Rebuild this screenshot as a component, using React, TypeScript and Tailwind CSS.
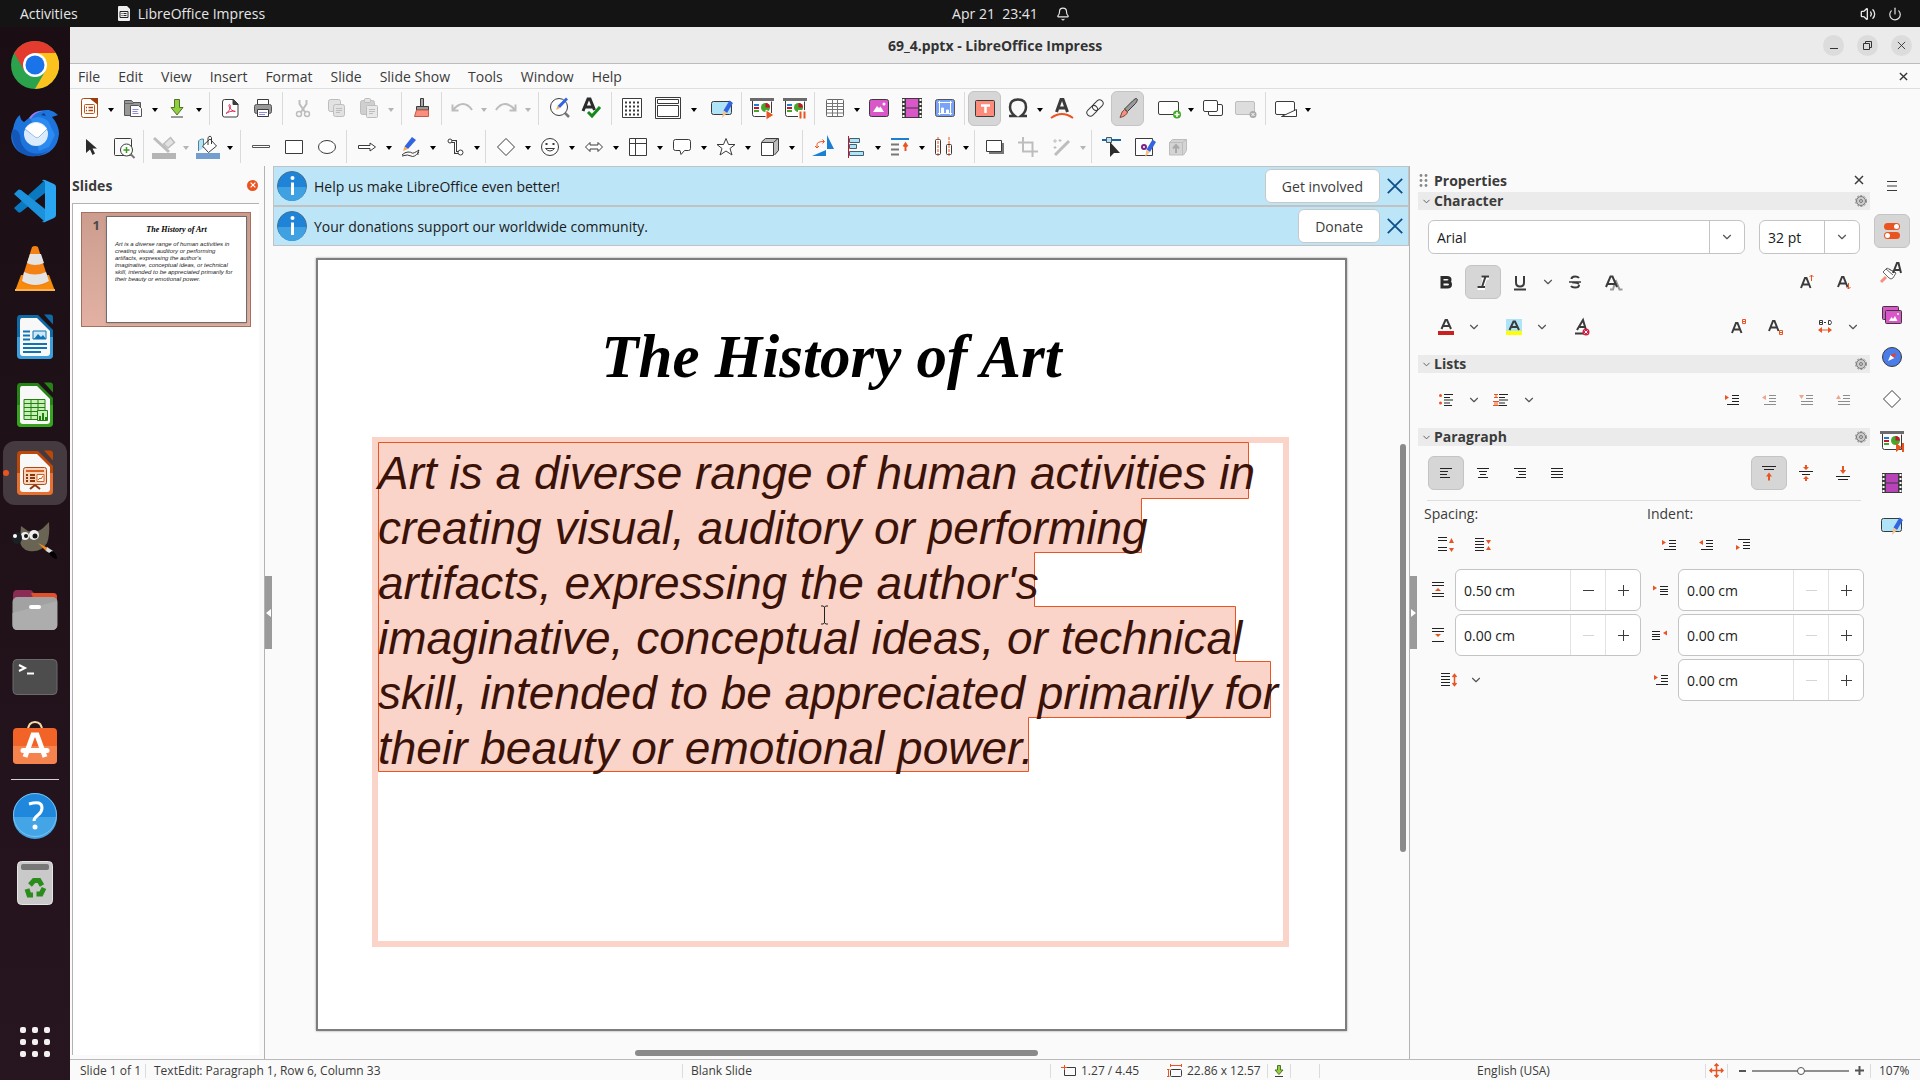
import type { ReactNode } from "react";
import { Bell, ChevronDown, Power, Volume2 } from "lucide-react";

const K = "#3b3b3b";
const G = "#bdbdbd";
const O = "#e95420";

// ---------- toolbar drawings, all on a 24x24 grid ----------

const board = (
  <>
    <path d="M2.500 5v13.500q0 2 2 2h17v-15" fill="#fff" stroke={K} />
    <path d="M0 2h24v3H0z" fill="#6b6b6b" stroke="none" />
    <g stroke="none">
      <path d="M4 8h5v2H4z" fill="#1b7fd4" />
      <path d="M4 11h5v2H4z" fill="#c9102f" />
      <path d="M4 14h5v2H4z" fill="#43a82a" />
      <circle cx="15.500" cy="11.500" r="4.500" fill="#43a82a" />
      <path d="M15.500 11.500V7a4.500 4.500 0 0 1 4.500 4.500z" fill="#c9102f" />
    </g>
  </>
);

const pencil = (
  <g stroke="none">
    <path d="M19.500 4.500l3.500 2.500-6 10-3.500-2.500z" fill="#3465e0" />
    <path d="M13.500 14.500l3.500 2.500-5 5z" fill="#f7c08a" />
  </g>
);

const film = (fill: string) => (
  <>
    <path d="M2 2h20v20H2z" fill={K} stroke="none" />
    <path d="M5.500 2.500h13v19h-13z" fill={fill} stroke={K} />
    <path d="M5.500 12h13" stroke={K} />
    <path d="M3.500 3v18M20.500 3v18" stroke="#fff" strokeWidth="2" strokeDasharray="2 2" />
  </>
);

const icons: Record<string, ReactNode> = {
  new: (
    <>
      <path d="M6.500 2.500h9l5 4v13q0 2-2 2h-12q-2 0-2-2v-15q0-2 2-2z" fill="#fff" stroke="#b04a12" />
      <path d="M12 2h9v7z" fill="#9c3d0c" stroke="none" />
      <rect x="7.500" y="8.500" width="10" height="9" rx="1" stroke="#c0571c" />
      <path d="M9 11.500h1M11.500 11.500H16M9 14.500h1M11.500 14.500H16" stroke="#b04a12" strokeWidth="1.500" />
    </>
  ),
  open: (
    <>
      <path d="M3.500 4.500h7l1.500 2h7.500v13h-16z" fill="#999" stroke="#555" strokeLinejoin="round" />
      <path d="M3.500 7.500h9" stroke="#666" />
      <path d="M9.500 9.500h8l3 3v8h-11z" fill="#fff" stroke="#555" />
      <path d="M11.500 13.500h6M11.500 15.500h5M11.500 17.500h6" stroke="#8d8be0" />
    </>
  ),
  save: (
    <>
      <path d="M9.500 3.500h5v8h3.500L12 19l-6-7.500h3.500z" fill="#8fd03f" stroke="#55702c" />
      <path d="M6 21h12" stroke={K} />
    </>
  ),
  pdf: (
    <>
      <path d="M6.500 3.500h9l4.500 4.500v11q0 2-2 2H6.500q-2 0-2-2v-13q0-2.500 2-2.500z" fill="#fff" stroke={K} />
      <path d="M15 3.500V8.500h5z" fill={K} stroke={K} />
      <path d="M8 17.500c5-3.500 5-9 3.500-9s0 6 5.500 7c1.500 0-4-1.500-9 2z" stroke="#dd2b56" />
    </>
  ),
  print: (
    <>
      <path d="M6.500 3.500h11v6h-11z" fill="#fff" stroke={K} />
      <rect x="3.500" y="8.500" width="17" height="9" rx="2" fill="#999" stroke="#555" />
      <path d="M6.500 13.500h11v7h-11z" fill="#fff" stroke={K} />
      <path d="M8 16.500h8M8 18.500h6" stroke="#8d8be0" />
    </>
  ),
  cut: (
    <>
      <path d="M8.500 4v4l5.500 8M15.500 4v4l-5.500 8" stroke={G} strokeWidth="2" />
      <circle cx="8" cy="18" r="2.500" stroke={G} strokeWidth="1.500" />
      <circle cx="16" cy="18" r="2.500" stroke={G} strokeWidth="1.500" />
    </>
  ),
  copy: (
    <>
      <rect x="4.500" y="3.500" width="12" height="12" rx="2" fill="#e2e2e2" stroke={G} />
      <rect x="9.500" y="8.500" width="11" height="12" rx="2" fill="#e2e2e2" stroke={G} />
      <path d="M12 12.500h6M12 14.500h6M12 16.500h4" stroke={G} />
    </>
  ),
  paste: (
    <>
      <rect x="3.500" y="4.500" width="14" height="14" rx="2" fill="#cfcfcf" stroke={G} />
      <rect x="7.500" y="2.500" width="6" height="4" rx="1" fill="#e2e2e2" stroke={G} />
      <rect x="9.500" y="9.500" width="11" height="12" rx="1" fill="#e8e8e8" stroke={G} />
      <path d="M12 13.500h6M12 15.500h6M12 17.500h4" stroke={G} />
    </>
  ),
  brush: (
    <>
      <path d="M10.500 2.500h3v8h-3z" fill="#aaa" stroke={K} />
      <path d="M6.500 10.500h12v3.500h-12z" fill="#999" stroke={K} />
      <path d="M6.500 14h12v6.500h-14z" fill="#fa8f7f" stroke="#c25b4a" />
    </>
  ),
  undo: <path d="M8.500 14.500h-6v-6M3 14q5-6 10-6t9 6" stroke={G} strokeWidth="2" />,
  redo: <path d="M15.500 14.500h6v-6M21 14q-5-6-10-6t-9 6" stroke={G} strokeWidth="2" />,
  find: (
    <>
      <circle cx="12" cy="11" r="8.500" fill="#fff" stroke={K} />
      <path d="M18 17l4 4" stroke="#777" strokeWidth="2.500" />
      <path d="M19 1.500l2 2-8 8.500-2.500-2z" fill="#3465e0" stroke="none" />
      <path d="M10.500 10l2.500 2-4 2z" fill="#f7a85a" stroke="none" />
    </>
  ),
  spell: (
    <>
      <path d="M3 15L8 3h2l4.500 11M5 11h8" stroke="#2b2b2b" strokeWidth="3" />
      <path d="M8 16l4 4 8-9" stroke="#13891b" strokeWidth="3" />
    </>
  ),
  grid: (
    <>
      <path d="M2.500 2.500h19v19h-19z" fill="#fff" stroke={K} />
      <path d="M5 6.500h14M5 10.500h14M5 14.500h14M5 18.500h14" stroke={K} strokeWidth="2" strokeDasharray="2 2" />
    </>
  ),
  display: (
    <>
      <path d="M-.5 1.500h25v21h-25z" fill="#fff" stroke={K} />
      <path d="M1.500 3.500h21v4h-21zM1.500 9.500h21v11h-21z" stroke={K} />
    </>
  ),
  master: (
    <>
      <rect x="1.500" y="5.500" width="20" height="13" rx="2" fill="#aee3f8" stroke={K} />
      {pencil}
    </>
  ),
  startFirst: (
    <>
      {board}
      <path d="M16 14l8 5-8 5z" fill={O} stroke="#fafafa" />
    </>
  ),
  startCurrent: (
    <>
      {board}
      <path d="M15 14h9v10h-9z" fill="#fafafa" stroke="none" />
      <path d="M17.500 15.500v7M21.500 15.500v7" stroke={O} strokeWidth="2" />
    </>
  ),
  table: (
    <>
      <rect x="3.500" y="3.500" width="17" height="17" rx="1" fill="#fff" stroke="#666" />
      <path d="M3.500 7.500h17M3.500 10.500h17M3.500 13.500h17M3.500 17h17M9.500 3.500v17M14.500 3.500v17" stroke="#777" />
    </>
  ),
  image: (
    <>
      <rect x="2.500" y="3.500" width="19" height="17" rx="2" fill="#d957c8" stroke={K} />
      <path d="M6 16l4-6 2 2 1.500-1.500L17 16z" fill="#fff" stroke="none" />
      <circle cx="17" cy="8" r="1.500" fill="#fff" stroke="none" />
    </>
  ),
  video: film("#d957c8"),
  chart: (
    <>
      <rect x="2.500" y="3.500" width="19" height="17" rx="2" fill="#7aa2f7" stroke="#555" />
      <path d="M6.500 5v14M17.500 5v14M5 6.500h14M5 17.500h14" stroke="#fff" />
      <path d="M8.500 17v-5h2v5zM13.500 17v-3h2v3z" fill="#fff" stroke="#fff" />
    </>
  ),
  textbox: (
    <>
      <rect x="2.500" y="4.500" width="19" height="16" rx="1" fill="#fc8b7b" stroke={K} />
      <path d="M8 9.500h9M12.500 9v8" stroke="#fff" strokeWidth="2.500" />
    </>
  ),
  omega: <path d="M3 20h6c-4-3-5-6-5-9q0-7.500 8-7.500t8 7.500c0 3-1 6-5 9h6" stroke={K} strokeWidth="2.500" />,
  fontwork: (
    <>
      <path d="M6.500 16L11 3.500h2L17.500 16M8.500 12h7" stroke={K} strokeWidth="3" />
      <path d="M1 22q11-8 22 0" stroke={O} strokeWidth="2" />
    </>
  ),
  link: (
    <g stroke={K} transform="rotate(-45 12 12)">
      <rect x="2" y="8.500" width="12" height="7" rx="3.500" />
      <rect x="10" y="8.500" width="12" height="7" rx="3.500" />
    </g>
  ),
  draw: (
    <>
      <path d="M20.500 2.500q2 1-1 5l-8 8-3-2.500 8-8q3-3 4-2.500z" fill="#999" stroke={K} />
      <path d="M8.500 13.500l3 2.500q-1 4-7.500 5.500 2-7 4.500-8z" fill="#fa8f7f" stroke="#7a4a40" />
    </>
  ),
  newSlide: (
    <>
      <rect x="1.500" y="5.500" width="20" height="13" rx="1.500" fill="#fff" stroke={K} />
      <circle cx="20" cy="18.500" r="4" fill="#43a82a" stroke="none" />
      <path d="M20 16v5M17.500 18.500h5" stroke="#fff" strokeWidth="1.500" />
    </>
  ),
  dupSlide: (
    <>
      <rect x="7.500" y="8.500" width="14" height="11" rx="1.500" fill="#fff" stroke={K} />
      <rect x="2.500" y="4.500" width="14" height="11" rx="1.500" fill="#fff" stroke={K} />
    </>
  ),
  delSlide: (
    <>
      <rect x="1.500" y="5.500" width="19" height="13" rx="1.500" fill="#ddd" stroke={G} />
      <circle cx="19" cy="18.500" r="3.500" fill="#aaa" stroke="none" />
      <path d="M17.500 17l3 3M20.500 17l-3 3" stroke="#fff" />
    </>
  ),
  slideLayout: (
    <>
      <rect x="1.500" y="5.500" width="19" height="13" rx="1.500" fill="#fff" stroke={K} />
      <path d="M7.500 20.500h15v-7z" fill="#fff" stroke={K} />
    </>
  ),
  select: <path d="M7 4v14l4-3.500 2.500 5.500 2.500-1.500-2.500-5H18z" fill="#2b2b2b" stroke="none" />,
  zoom: (
    <>
      <rect x="2.500" y="3.500" width="17" height="17" rx="1" stroke={K} />
      <circle cx="14.500" cy="15" r="6" fill="#fff" stroke={K} />
      <path d="M14.500 12v6M11.500 15h6" stroke="#3a9c22" strokeWidth="1.500" />
      <path d="M19 19.500l3.500 3.500" stroke="#777" strokeWidth="2" />
    </>
  ),
  lineColor: (
    <>
      <path d="M2 3l15 14" stroke={G} strokeWidth="3" />
      <path d="M11.500 9l7-6.500 4 5-6.500 5.500z" fill="#e2e2e2" stroke={G} strokeWidth="1.500" />
      <path d="M0 18h24v6H0z" fill="#b5b5b5" stroke="none" />
    </>
  ),
  fillColor: (
    <>
      <path d="M2.500 16V7q0-3 5-3v9" fill="#aee3f8" stroke="#5b7f92" />
      <path d="M6.500 11L14 4l6.500 7-8 6.500z" fill="#fff" stroke={K} />
      <path d="M12 10V2.500q2.500-3 3.500 0V9" stroke={K} />
      <path d="M0 18h24v6H0z" fill="#729fcf" stroke="none" />
    </>
  ),
  line: <path d="M3.500 10.500h17v2h-17z" fill="#fff" stroke="#555" />,
  rect: <path d="M3.500 5.500h17v13h-17z" fill="#fff" stroke={K} />,
  ellipse: <ellipse cx="12" cy="12" rx="8.500" ry="6.500" fill="#fff" stroke={K} />,
  arrowLine: <path d="M3.500 10.500H15v-2.500l5.500 4L15 16v-2.500H3.500z" fill="#fff" stroke={K} />,
  curve: (
    <>
      <path d="M13 2l4 3-8 9-3.500-2.500z" fill="#3465e0" stroke="none" />
      <path d="M5.500 11.500L9 14l-5 2z" fill="#f7a85a" stroke="none" />
      <path d="M3 20q3-3 6-3t4 1 7-3q-2 3-1 5M3 21q6-2 9 0t8-4" stroke={K} />
    </>
  ),
  connector: (
    <>
      <path d="M7.500 6.500h5v11h4" stroke={K} strokeWidth="3" />
      <path d="M7.500 6.500h5v11h4" stroke="#fff" />
      <circle cx="7" cy="6" r="2" fill="#fff" stroke={K} />
      <circle cx="17.500" cy="17.500" r="2.500" fill="#fff" stroke={K} />
    </>
  ),
  diamond: <path d="M12 3.500l8.500 8.500-8.500 8.500L3.500 12z" fill="#fff" stroke={K} />,
  smiley: (
    <>
      <circle cx="12" cy="12" r="8.500" fill="#fff" stroke={K} />
      <path d="M8.500 8v2M15.500 8v2" stroke={K} strokeWidth="2" />
      <path d="M7.500 13.500h9q-4.500 5-9 0z" stroke={K} />
    </>
  ),
  biArrow: <path d="M3.500 12L8 7.500v2.500h8V7.500l4.500 4.500-4.500 4.500V14H8v2.500z" fill="#fff" stroke={K} />,
  flow: <path d="M3.500 3.500h17v17h-17zM3.500 8.500h17M9.500 3.500v17" fill="#fff" stroke={K} />,
  callout: (
    <path d="M5.500 4.500h13q2 0 2 2v7q0 2-2 2h-4l-3.500 4-1-4H5.500q-2 0-2-2v-7q0-2 2-2z" fill="#fff" stroke={K} />
  ),
  star: <path d="M12 3.500l2.500 6h6.500l-5 4 2 6.500-6-4-6 4 2-6.500-5-4h6.500z" fill="#fff" stroke={K} />,
  cube: (
    <>
      <path d="M3.500 7l4-3.500h13v12l-4 4.500" fill="#bdbdbd" stroke={K} />
      <path d="M3.500 7.500h12v13h-12z" fill="#fff" stroke={K} />
      <path d="M16 7l4-3.500" stroke={K} />
    </>
  ),
  rotate: (
    <>
      <path d="M16 0v14h7z" fill="#1b7fd4" stroke="none" />
      <path d="M1 21l14-6v6z" fill="#1b7fd4" stroke="none" />
      <path d="M6 13V9.500q0-3 7-3M4 11l2 2 2-2M11.500 4.500l2 2-2 2" stroke={O} />
    </>
  ),
  align: (
    <>
      <path d="M4.500 1v22" stroke="#c9102f" />
      <path d="M5.500 3.500h10v4h-10zM5.500 9.500h7v4h-7zM5.500 16.500h14v4h-14z" fill="#aee3f8" stroke="#44606c" />
    </>
  ),
  arrange: (
    <>
      <path d="M3 4h18" stroke="#1b7fd4" strokeWidth="2" />
      <path d="M3 9.500h8M3 14.500h8M3 19.500h8" stroke="#777" strokeWidth="2" />
      <path d="M17.500 16V9M15.500 11.500l2-3 2 3" stroke={O} strokeWidth="2" />
    </>
  ),
  distribute: (
    <>
      <rect x="3.500" y="4.500" width="5" height="15" rx="1" fill="#fff" stroke={K} />
      <rect x="14.500" y="9.500" width="5" height="10" rx="1" fill="#fff" stroke={K} />
      <path d="M6 2v20M17 2v20" stroke={O} strokeDasharray="3 1" />
    </>
  ),
  shadow: (
    <>
      <path d="M6 8h15v11H6z" fill="#777" stroke="none" />
      <path d="M3.500 5.500h15v11h-15z" fill="#fff" stroke={K} />
    </>
  ),
  crop: <path d="M7 2v14.500h13M2 7.500h14.500V22M20 16.500h2" stroke={G} strokeWidth="2" />,
  filter: (
    <>
      <path d="M6 20L20 6" stroke={G} strokeWidth="3" />
      <path d="M6 4v4M4 6h4M11 4v3M9.500 5.500h3M6 11v3M4.500 12.500h3" stroke={G} />
    </>
  ),
  points: (
    <>
      <path d="M2 5h19" stroke="#1565a8" strokeWidth="2" />
      <path d="M6.500 2.500h5v5h-5z" fill="#aee3f8" stroke="#555" />
      <path d="M10 7v15l4-4h6z" fill="#2b2b2b" stroke="none" />
    </>
  ),
  glue: (
    <>
      <path d="M2.500 3.500h17v17h-17z" fill="#fff" stroke={K} />
      <circle cx="11" cy="12" r="2" fill="#fff" stroke="#7b2382" strokeWidth="2" />
      {pencil}
    </>
  ),
  extrude: (
    <>
      <path d="M3.500 7.500l3-3h14v11l-3 4.500h-14z" fill="#d4d4d4" stroke={G} />
      <path d="M3.500 7.500h13v12M16.500 7.500l4-3" stroke={G} />
      <path d="M10 18v-7M7 13.500l3-3.500 3 3.500" stroke="#aaa" strokeWidth="2" />
    </>
  ),
  // sidebar deck
  props: (
    <>
      <rect x="4" y="4" width="16" height="7" rx="3.500" fill={O} stroke="none" />
      <rect x="4" y="13" width="16" height="7" rx="3.500" fill={O} stroke="none" />
      <circle cx="16.500" cy="7.500" r="2.500" fill="#fff" stroke="none" />
      <circle cx="7.500" cy="16.500" r="2.500" fill="#fff" stroke="none" />
    </>
  ),
  styles: (
    <>
      <path d="M1 21l5-5" stroke="#fa8f7f" strokeWidth="3" />
      <path d="M3 11l4-4 9 5-3 5q-2 2-4 0z" fill="#fff" stroke="#666" />
      <path d="M6 8l7 6M9 8l7 4" stroke="#666" />
      <path d="M13 12L17 2h1.500L21 12M14 9h6" stroke={K} strokeWidth="2" />
    </>
  ),
  gallery: (
    <>
      <rect x="2.500" y="3.500" width="16" height="13" rx="1" fill="#d957c8" stroke={K} />
      <rect x="5.500" y="7.500" width="16" height="13" rx="1" fill="#d957c8" stroke={K} />
      <path d="M9 18l2.500-4 1.500 2 2-3 2.500 5z" fill="#fff" stroke="none" />
      <circle cx="18" cy="11" r="1" fill="#fff" stroke="none" />
    </>
  ),
  navigator: (
    <>
      <circle cx="12" cy="12" r="9.500" fill="#4a7de8" stroke={K} />
      <path d="M8 16l2.500-6 4 3z" fill="#fff" stroke="none" />
      <path d="M10.500 10l5.500-2-1.500 5z" fill="#e8402a" stroke="none" />
    </>
  ),
  transition: (
    <>
      {board}
      <path d="M16 14l6 4.500-6 4.500z" fill={O} stroke="none" />
      <path d="M23 14v9" stroke={O} strokeWidth="2" />
    </>
  ),
  animation: film("#b843b8"),
  // character row
  bold: <path d="M8 7.500h5q3 0 3 2.250t-3 2.250H8zM8 12h5.500q3 0 3 2.500t-3 2.500H8z" stroke="#2b2b2b" strokeWidth="3" />,
  italic: (
    <>
      <path d="M10.500 7.500h7.500M6.500 18h7.500M14.500 7l-3.500 11" stroke="#fff" strokeWidth="4" />
      <path d="M10.500 6.500h7.500M6.500 17h7.500M14.500 6.500L11 17" stroke={K} strokeWidth="2" />
    </>
  ),
  underline: <path d="M8 6v6.500q0 4 4 4t4-4V6M6 19.500h12" stroke={K} strokeWidth="2" />,
  strike: (
    <>
      <path d="M16 8q-1-1.500-4-1.500-3.500 0-3.500 2.500M8 16q1 1.500 4 1.500 4 0 4-2.500" stroke={K} strokeWidth="2" />
      <path d="M6 12h12M9 12.500q6 0 7 2" stroke={K} strokeWidth="1.500" />
    </>
  ),
  shadowA: (
    <>
      <path d="M10 19.500h3l2.500-9M15.500 10l4 9.500h3" stroke="#999" strokeWidth="2" />
      <path d="M6 17l4.500-10.500h2L17 17M8 14h7" stroke={K} strokeWidth="2" />
    </>
  ),
  grow: (
    <>
      <path d="M7 18l4-10h1.500l4 10M8.500 14.500h7" stroke={K} strokeWidth="2" />
      <path d="M17.500 11V5M15.500 7l2-2 2 2" stroke={O} />
    </>
  ),
  shrink: (
    <>
      <path d="M7 17l4-10h1.500l4 10M8.500 13.500h7" stroke={K} strokeWidth="2" />
      <path d="M17.500 13v6M15.500 17l2 2 2-2" stroke={O} />
    </>
  ),
  fontColor: (
    <>
      <path d="M7.500 14l4-9h1.500l4 9M9 11h7" stroke={K} strokeWidth="2" />
      <path d="M4 16h16v4H4z" fill="#c9211e" stroke="none" />
    </>
  ),
  highlight: (
    <>
      <path d="M4 4h16v12H4z" fill="#aee3f8" stroke="none" />
      <path d="M7.500 15l4-8.500h1.500l4 8.500M9 12h7" stroke={K} strokeWidth="2" />
      <path d="M4 16h16v4H4z" fill="#ff0" stroke="none" />
    </>
  ),
  clear: (
    <>
      <path d="M7 15l6-10 3 10M9 12h7M5 18.500h9" stroke={K} strokeWidth="2" />
      <circle cx="16" cy="17" r="3.500" fill="#d11f45" stroke="none" />
      <path d="M14.500 15.500l3 3M17.500 15.500l-3 3" stroke="#fff" />
    </>
  ),
  sup: (
    <>
      <path d="M6 18l4-10h1.500l4 10M7.500 14.500h7" stroke={K} strokeWidth="2" />
      <path d="M16.500 4.500h3v4h-3zM16.500 6.500h3" stroke={O} />
    </>
  ),
  sub: (
    <>
      <path d="M6 16l4-10h1.500l4 10M7.500 12.500h7" stroke={K} strokeWidth="2" />
      <path d="M16.500 15.500h3v4h-3zM16.500 17.500h3" stroke={O} />
    </>
  ),
  kern: (
    <>
      <path d="M6.500 5.500h3v4h-3zM6.500 7.500h3M11 7.500h2M15.500 5.500h2l1 2-1 2h-2z" stroke={K} />
      <path d="M7 15h10" stroke={O} />
      <path d="M5 15l4-3v6zM19 15l-4-3v6z" fill={O} stroke="none" />
    </>
  ),
  bullets: (
    <>
      <path d="M10 6.500h9M10 9.500h6M10 12h9M10 15h6M10 17.500h8" stroke="#222" />
      <circle cx="6.500" cy="7.500" r="1.500" fill={O} stroke="none" />
      <circle cx="6.500" cy="15" r="1.500" fill={O} stroke="none" />
    </>
  ),
  numbers: (
    <>
      <path d="M10 6.500h9M10 9.500h6M10 12h9M10 15h6M10 17.500h8" stroke="#222" />
      <path d="M5 6.500h4M7 6.500v3M5 9.500h4M4 13.500h6M4 17.500h6M6 13.500v4M8 13.500v4" stroke={O} />
    </>
  ),
  alignL: <path d="M6 7.500h12M6 10.500h8M6 13.500h7M6 16.500h10" stroke="#222" />,
  alignC: <path d="M6 7.500h12M8 10.500h8M9 13.500h6M7 16.500h10" stroke="#222" />,
  alignR: <path d="M6 7.500h12M10 10.500h8M11 13.500h7M8 16.500h10" stroke="#222" />,
  alignJ: <path d="M6 7.500h12M6 10.500h12M6 13.500h12M6 16.500h12" stroke="#222" />,
  vTop: (
    <>
      <path d="M5 5.500h14M7 8.500h10" stroke="#222" />
      <path d="M12 11.500l3 4h-2v4h-2v-4H9z" fill={O} stroke="none" />
    </>
  ),
  vMid: (
    <>
      <path d="M5 10.500h14M8 13.500h8" stroke="#222" />
      <path d="M12 9l-3-3h2V4h2v2h2zM12 15l-3 3h2v2h2v-2h2z" fill={O} stroke="none" />
    </>
  ),
  vBot: (
    <>
      <path d="M5 15.500h14M7 18.500h10" stroke="#222" />
      <path d="M12 13l-3-4h2V5h2v4h2z" fill={O} stroke="none" />
    </>
  ),
  parMore: (
    <>
      <path d="M4 4.500h9M4 7.500h9M4 14.500h9M4 17.500h9" stroke="#222" />
      <path d="M17.500 5l2.500 5h-5zM17.500 19l2.500-4h-5z" fill={O} stroke="none" />
    </>
  ),
  parLess: (
    <>
      <path d="M4 5.500h9M4 8.500h9M4 11.500h9M4 14.500h9M4 17.500h9" stroke="#222" />
      <path d="M17.500 11l2.500-4h-5zM17.500 13l2.500 4h-5z" fill={O} stroke="none" />
    </>
  ),
  indentMore: (
    <>
      <path d="M12 7.500h7M12 10.500h7M12 13.500h7M7 16.500h12" stroke="#222" />
      <path d="M5 7l4 2.500L5 12z" fill={O} stroke="none" />
    </>
  ),
  indentLess: (
    <>
      <path d="M12 7.500h7M12 10.500h7M12 13.500h7M7 16.500h12" stroke="#222" />
      <path d="M9 7l-4 2.500L9 12z" fill={O} stroke="none" />
    </>
  ),
  hanging: (
    <>
      <path d="M7 6.500h12M12 9.500h7M12 12.500h7M12 15.500h7" stroke="#222" />
      <path d="M5 12l4 2.500L5 17z" fill={O} stroke="none" />
    </>
  ),
  demote: (
    <>
      <path d="M12 7.500h7M12 10.500h7M7 13.500h12M7 16.500h12" stroke="#222" />
      <path d="M5 7h5l-2.500 4z" fill={O} stroke="none" />
    </>
  ),
  promote: (
    <>
      <path d="M12 7.500h7M12 10.500h7M7 13.500h12M7 16.500h12" stroke="#222" />
      <path d="M5 11h5l-2.500-4z" fill={O} stroke="none" />
    </>
  ),
  spaceAbove: (
    <>
      <path d="M6 4.500h12M6 7.500h12M6 15.500h12M6 18.500h12" stroke="#222" />
      <path d="M12 10l3 3H9z" fill={O} stroke="none" />
    </>
  ),
  spaceBelow: (
    <>
      <path d="M6 5.500h12M6 8.500h12M6 18.500h12" stroke="#222" />
      <path d="M12 14l3-3H9z" fill={O} stroke="none" />
    </>
  ),
  beforeText: (
    <>
      <path d="M11 8.500h8M11 11.500h8M11 13.500h8M11 16.500h8" stroke="#222" />
      <path d="M4 7.500l4 2.500-4 2.500z" fill={O} stroke="none" />
    </>
  ),
  afterText: (
    <>
      <path d="M3 8.500h8M3 11.500h8M3 13.500h8M3 16.500h8" stroke="#222" />
      <path d="M18 7.500L14 10l4 2.500z" fill={O} stroke="none" />
    </>
  ),
  lineSpacing: (
    <>
      <path d="M4 5.500h9M4 8.500h9M4 11.500h9M4 14.500h9M4 17.500h9" stroke="#222" />
      <path d="M17.500 7v10M15.500 9l2-2.500 2 2.500M15.500 15l2 2.500 2-2.500" stroke={O} strokeWidth="1.500" />
    </>
  ),
};

function Icon({ name }: { name: string }) {
  return (
    <svg width="24" height="24" viewBox="0 0 24 24" fill="none" className="shrink-0 overflow-visible" aria-hidden="true">
      {icons[name]}
    </svg>
  );
}

// ---------- toolbars ----------

// "|" separator, "||" separator after a drop-down, "_" gap, "x>" split button, "x*" pressed, "x-" disabled arrow
const standardBar = "new> open> save> || pdf print | cut copy paste>- || brush | undo>- redo>- || find spell | grid display> master | startFirst startCurrent | table> image video chart | textbox* omega> fontwork link draw* _ newSlide> dupSlide delSlide | slideLayout>";
const drawingBar = "select zoom | lineColor>- fillColor> || line rect ellipse | arrowLine> curve> connector> | diamond> smiley> biArrow> flow> callout> star> cube> || rotate align> arrange> distribute> | shadow crop filter>- | points glue extrude";

function Toolbar({ label, items, className }: { label: string; items: string; className: string }) {
  return (
    <div role="toolbar" aria-label={label} className={`flex items-center ${className}`}>
      {items.split(" ").map((item, idx) => {
        if (item === "|") return <span key={idx} className="mx-[3px] h-[33px] w-px bg-[#dadada]" />;
        if (item === "||") return <span key={idx} className="mr-[3px] ml-[5px] h-[33px] w-px bg-[#dadada]" />;
        if (item === "_") return <span key={idx} className="w-2" />;
        const name = item.replace(/[>*-]/g, "");
        const wide = name === "display";
        return (
          <div key={idx} className={`flex ${wide ? "mr-[6px]" : ""}`}>
            <button
              type="button"
              aria-label={name}
              className={`flex h-[35px] items-center justify-center rounded-md border ${wide ? "w-10" : "w-[33px]"} ${
                item.includes("*") ? "border-[#c4c4c4] bg-[#d6d6d6]" : "border-transparent"
              }`}
            >
              <Icon name={name} />
            </button>
            {item.includes(">") && (
              <button type="button" aria-label={`${name} options`} className="flex w-[11px] items-center justify-center">
                <svg width="6" height="4" viewBox="0 0 6 4" className="mt-[3px]">
                  <path d="M0 0h6L3 4z" fill={item.includes("-") ? "#b5b5b5" : "#000"} />
                </svg>
              </button>
            )}
          </div>
        );
      })}
    </div>
  );
}

// ---------- dock ----------

function OfficeDoc({ color, dark, children }: { color: string; dark: string; children: ReactNode }) {
  return (
    <svg width="48" height="48" viewBox="0 0 48 48" fill="none">
      <path d="M9 2h18l15 15v25q0 4-4 4H10q-4 0-4-4V6q0-4 3-4z" fill={dark} />
      <path d="M6 24h36v18q0 4-4 4H10q-4 0-4-4z" fill={color} />
      <path d="M11 5h15l13 13v22q0 3-3 3H12q-3 0-3-3V8q0-3 2-3z" fill="#f8f8f8" />
      <path d="M33 1.500h6q3 0 3 3v7z" fill={dark} />
      {children}
    </svg>
  );
}

const dockApps: { name: string; art: ReactNode; active?: boolean }[] = [
  {
    name: "Google Chrome",
    art: (
      <svg width="48" height="48" viewBox="0 0 48 48">
        <circle cx="24" cy="24" r="24" fill="#2ba24c" />
        <path d="M3.200 12A24 24 0 0 1 44.800 12H24L13.600 30z" fill="#e33b2e" />
        <path d="M44.800 12A24 24 0 0 1 24 48L34.400 30 24 12z" fill="#fcc31e" />
        <circle cx="24" cy="24" r="12" fill="#fff" />
        <circle cx="24" cy="24" r="9.500" fill="#1a73e8" />
      </svg>
    ),
  },
  {
    name: "Thunderbird",
    art: (
      <svg width="48" height="48" viewBox="0 0 48 48">
        <path d="M2 20q2-11 7-14 0 5 4 7l6-5q6-8 19-7 5 1 9 5l-6 2q7 8 7 17-2 19-21 22Q6 48 1 33q-2-7 1-13z" fill="#1d74dc" />
        <path d="M1 21q5-2 8 5 0 12 9 17 9 4 19-1-9 7-20 5Q0 42 1 21z" fill="#1557b8" />
        <path d="M18 9q5-8 14-7-8 1-12 8z" fill="#9a7be8" />
        <path d="M20 10q8-5 17 2l7 14-6 12-10 4z" fill="#2b8bf0" />
        <circle cx="25" cy="25" r="12" fill="#dcebfb" />
        <path d="M14 20l10 9q2 1 4 0l8-9q-11-12-22 0z" fill="#fff" />
        <path d="M14 20l10 8q2 2 4 0l8-8" fill="none" stroke="#8db9e8" />
        <path d="M30 6l3-2 2 3z" fill="#0b3f88" />
      </svg>
    ),
  },
  {
    name: "Visual Studio Code",
    art: (
      <svg width="48" height="48" viewBox="0 0 48 48">
        <path d="M3 31l4 4q1 1 3 0L34 16V3z" fill="#0b79bf" />
        <path d="M3 17l4-4q1-1 3 0l24 19v13z" fill="#1c92dc" />
        <path d="M34 3l9 4q2 1 2 3v28q0 2-2 3l-9 4q-2 1-3-1 3 1 3-2V6q0-3-3-2 1-2 3-1z" fill="#2aa5f2" />
      </svg>
    ),
  },
  {
    name: "VLC media player",
    art: (
      <svg width="48" height="48" viewBox="0 0 48 48">
        <path d="M10 30h28l6 16H4z" fill="#f78b0c" />
        <path d="M4 44h40v2H4z" fill="#fbb254" />
        <path d="M21 2q3-2 6 0l11 35q-14 9-28 0z" fill="#f48113" />
        <path d="M19 9h11l3 9q-9 4-17 0zM13 27q11 5 22 0l3 9q-14 8-27 0z" fill="#e4e4e4" />
      </svg>
    ),
  },
  {
    name: "LibreOffice Writer",
    art: (
      <OfficeDoc color="#3c9fdb" dark="#0f6aa6">
        <path d="M12 18.500h7M12 22.500h7M12 26.500h7M12 31h24M12 35h24M12 39h18" stroke="#0f73b5" strokeWidth="2" />
        <path d="M22 18h13v8H22z" fill="#cfe8f8" stroke="#0f73b5" />
        <path d="M23 26l4-5 3 3 2-2 3 4z" fill="#0f73b5" />
      </OfficeDoc>
    ),
  },
  {
    name: "LibreOffice Calc",
    art: (
      <OfficeDoc color="#36a51d" dark="#268417">
        <path d="M13 18.500h21v20H13z" fill="#c6f0b6" stroke="#237f12" />
        <path d="M13 22.500h21M13 26.500h21M13 30.500h21M13 34.500h21M20 18v20M27 18v20" stroke="#237f12" />
        <path d="M26.500 29.500h10v10h-10z" fill="#c6f0b6" stroke="#237f12" />
        <path d="M29 39v-4M32 39v-7M35 39v-3" stroke="#237f12" strokeWidth="2" />
      </OfficeDoc>
    ),
  },
  {
    name: "LibreOffice Impress",
    active: true,
    art: (
      <OfficeDoc color="#e8702f" dark="#bb4708">
        <rect x="12.500" y="18.500" width="23" height="17" rx="2" fill="#f6d3bd" stroke="#b04a12" />
        <path d="M15 22h18" stroke="#d5601f" strokeWidth="2" />
        <path d="M15 26h2M15 29h2M15 32h2M19 26h5M19 29h5M19 32h5" stroke="#8a370a" strokeWidth="2" />
        <path d="M26 25.500h7v7h-7zM27 31l2-2 1 1 2-3" fill="#fff" stroke="#d5601f" />
        <path d="M24 36l-5 4M24 36l5 4" stroke="#8a370a" strokeWidth="2" />
      </OfficeDoc>
    ),
  },
  {
    name: "GIMP",
    art: (
      <svg width="48" height="48" viewBox="0 0 48 48">
        <path d="M10 9l7 5q10 2 15-3l6-6q1 14-2 21-6 10-18 8-9-2-9-11z" fill="#6a6455" />
        <circle cx="14" cy="19" r="4" fill="#eee" />
        <circle cx="23" cy="18" r="5" fill="#eee" />
        <circle cx="15" cy="19" r="2" fill="#111" />
        <circle cx="24" cy="19" r="2.500" fill="#111" />
        <ellipse cx="6" cy="21" rx="5" ry="6" fill="#1b2024" />
        <circle cx="4" cy="19" r="2" fill="#fff" />
        <path d="M27 26l10 5-2 3z" fill="#f08a24" />
        <path d="M36 30l6 4-2 3-5-3z" fill="#ddd" />
        <path d="M41 34q5 2 5 8-6-1-8-6z" fill="#000" />
      </svg>
    ),
  },
  {
    name: "Files",
    art: (
      <svg width="48" height="48" viewBox="0 0 48 48">
        <path d="M2 10q0-5 4-5h13q2 0 3 2l1 1h19q4 0 4 4v10H2z" fill="#8b2c55" />
        <path d="M20 8h22q4 0 4 4v10H26z" fill="#e2502b" />
        <rect x="1.500" y="12" width="45" height="33" rx="5" fill="#a2a2a2" />
        <path d="M1.500 40V28L46 16v24q0 5-5 5H6q-4.500 0-4.500-5z" fill="#adadad" />
        <rect x="18" y="20" width="12" height="4" rx="2" fill="#fff" />
      </svg>
    ),
  },
  {
    name: "Terminal",
    art: (
      <svg width="48" height="48" viewBox="0 0 48 48" fill="none">
        <rect x="2" y="6.500" width="44" height="35" rx="4" fill="#4d4d4d" stroke="#6a6a6a" />
        <path d="M8 12l6 3-6 3M16 20.500h7" stroke="#fff" strokeWidth="2" />
      </svg>
    ),
  },
  {
    name: "Ubuntu Software",
    art: (
      <svg width="48" height="48" viewBox="0 2 48 48" fill="none">
        <path d="M17 12q0-9 7-9t7 9" stroke="#f9d9a8" strokeWidth="2" />
        <rect x="2" y="9" width="44" height="36" rx="4" fill="#f26327" />
        <path d="M2 27h44v14q0 4-4 4H6q-4 0-4-4z" fill="#f5834d" />
        <path d="M14 38l8-22h4l8 22" stroke="#fff" strokeWidth="5" />
        <path d="M12 31.500h24" stroke="#fff" strokeWidth="5" strokeLinecap="round" />
      </svg>
    ),
  },
];

const helpAndTrash: { name: string; art: ReactNode }[] = [
  {
    name: "Help",
    art: (
      <svg width="48" height="48" viewBox="0 0 48 48" fill="none">
        <circle cx="24" cy="24" r="22" fill="#1f88dc" />
        <path d="M2 26a22 22 0 0 0 44 0z" fill="#43a5e5" />
        <circle cx="24" cy="24" r="21.500" stroke="#7cc0f0" />
        <path d="M18 13q13-4 13 4 0 4-4 7t-4 6" stroke="#fff" strokeWidth="3" />
        <circle cx="24" cy="36" r="2.500" fill="#fff" />
      </svg>
    ),
  },
  {
    name: "Trash",
    art: (
      <svg width="48" height="48" viewBox="0 0 48 48" fill="none">
        <rect x="6.500" y="2.500" width="35" height="43" rx="4" fill="#c9c9c9" stroke="#e5e5e5" />
        <rect x="10" y="5" width="28" height="6" rx="2" fill="#777" />
        <g stroke="#2a8c1a" strokeWidth="5">
          <path d="M19 26l4-4.500h5l3 5" />
          <path d="M33 29l-3 6h-4.500" />
          <path d="M22 36h-4l-2-6" />
        </g>
      </svg>
    ),
  },
];

function Dock() {
  return (
    <nav aria-label="Dock" className="flex w-[70px] shrink-0 flex-col items-center bg-linear-to-b from-[#1a0e14] to-[#27151f] pt-[6px]">
      <div className="flex flex-col gap-1">
        {dockApps.map(({ name, art, active }) => (
          <button
            key={name}
            type="button"
            aria-label={name}
            className={`relative flex size-16 items-center justify-center rounded-xl ${active ? "bg-[#443a3f]" : ""}`}
          >
            {active && <span className="absolute left-0 size-[6px] rounded-full bg-[#e95420]" />}
            {art}
          </button>
        ))}
      </div>
      <hr className="mt-[2px] mb-[3px] w-12 border-[#d5d2d3]" />
      <div className="flex flex-col gap-1">
        {helpAndTrash.map(({ name, art }) => (
          <button key={name} type="button" aria-label={name} className="flex size-16 items-center justify-center">
            {art}
          </button>
        ))}
      </div>
      <button type="button" aria-label="Show Applications" className="mt-auto mb-[23px] grid grid-cols-3 gap-[6px]">
        {Array.from({ length: 9 }, (_, idx) => (
          <span key={idx} className="size-[6px] rounded-[2px] bg-[#f2f0f1]" />
        ))}
      </button>
    </nav>
  );
}

// ---------- small shared bits ----------

function Cross({ size, color, width = 1 }: { size: number; color: string; width?: number }) {
  return (
    <svg width={size} height={size} viewBox="0 0 10 10" fill="none" aria-hidden="true">
      <path d="M1 1l8 8M9 1l-8 8" stroke={color} strokeWidth={width} />
    </svg>
  );
}

function Splitter({ flip }: { flip?: boolean }) {
  return (
    <span className="flex h-[73px] w-[7px] shrink-0 items-center justify-center bg-[#9a9a9a]">
      <svg width="5" height="8" viewBox="0 0 5 8">
        <path d={flip ? "M0 0v8l5-4z" : "M5 0v8L0 4z"} fill="#fff" />
      </svg>
    </span>
  );
}

const bodyLines = [
  "Art is a diverse range of human activities in",
  "creating visual, auditory or performing",
  "artifacts, expressing the author's",
  "imaginative, conceptual ideas, or technical",
  "skill, intended to be appreciated primarily for",
  "their beauty or emotional power.",
];

function SlidesPanel() {
  return (
    <aside className="flex w-[194px] shrink-0 flex-col pt-px pb-1 pl-[2px]">
      <div className="flex h-9 items-center justify-between pr-[6px]">
        <h2 className="text-[14px] font-bold text-[#3b3b3b]">Slides</h2>
        <button type="button" aria-label="Close slides pane" className="flex size-[11px] items-center justify-center rounded-full bg-[#e95420]">
          <Cross size={6} color="#fff" width={2} />
        </button>
      </div>
      <div className="mr-[5px] flex-1 border-t border-l border-[#b3b3b3] bg-white px-2 pt-2">
        <div className="flex h-[115px] border border-[#a5705f] bg-linear-to-b from-[#cc9d8e] to-[#e2b1a3] py-[3px] pr-[3px]">
          <span className="w-6 pr-[6px] text-right text-[13px] font-bold text-[#4a4a4a]">1</span>
          <div className="flex-1 border border-[#6d6d6d] bg-white px-2 pt-[6px] shadow-sm">
            <div className="text-center font-['Liberation_Serif',serif] text-[8px] leading-[14px] font-bold italic">The History of Art</div>
            <div className="mt-1 font-['Liberation_Sans',sans-serif] text-[6px] leading-[7px] whitespace-nowrap text-[#222] italic">
              {bodyLines.map((line) => (
                <div key={line}>{line}</div>
              ))}
            </div>
          </div>
        </div>
      </div>
    </aside>
  );
}

function InfoBar({ text, action }: { text: string; action: string }) {
  return (
    <div className="flex h-10 items-center border border-[#c2c2c2] bg-[#bde5f8] pr-1 pl-[3px]">
      <svg width="30" height="30" viewBox="0 0 30 30" fill="none" aria-hidden="true">
        <circle cx="15" cy="15" r="14.500" fill="#1f84d8" stroke="#4a6f8c" />
        <path d="M1 16a14 14 0 0 0 28 0z" fill="#3fa0e2" />
        <path d="M15.500 11.500v12.500" stroke="#fff" strokeWidth="3" />
        <circle cx="15.500" cy="7" r="2" fill="#fff" />
      </svg>
      <span className="ml-[7px] flex-1 text-[14px] text-[#1a1a1a]">{text}</span>
      <button type="button" className="h-[34px] rounded-md border border-[#c8c8c8] bg-white px-4 text-[14px] text-[#3b3b3b]">
        {action}
      </button>
      <button type="button" aria-label="Close" className="ml-[6px] flex size-[18px] items-center justify-center">
        <Cross size={18} color="#0d4f8b" />
      </button>
    </div>
  );
}

function Slide() {
  return (
    <div className="relative mt-3 mr-[53px] ml-[43px] aspect-[4/3] border-2 border-[#7d7d7d] bg-white shadow-[0_0_2px_#999]">
      <h1 className="mt-[62px] text-center font-['Liberation_Serif',serif] text-[61px] leading-[70px] font-bold italic text-black">
        The History of Art
      </h1>
      <div className="mr-[56px] ml-[54px] mt-[45px] h-[510px] border-[6px] border-[#fad4c8]">
        <div className="relative -mt-px">
          <svg width="894" height="331" viewBox="0 0 894 331" className="absolute top-0 left-0" fill="none">
            <path
              d="M.5 .5H870.500V56.500H763.500V110.500H656.500V164.500H857.500V219.500H892.500V275.500H650.500V329.500H.5z"
              fill="#fad4c8"
              stroke="#e95420"
            />
          </svg>
          <div className="relative pt-1 font-['Liberation_Sans',sans-serif] text-[46px] leading-[55px] whitespace-nowrap text-[#3b1208] italic">
            {bodyLines.map((line) => (
              <div key={line}>{line}</div>
            ))}
          </div>
        </div>
      </div>
      <svg width="9" height="20" viewBox="0 0 9 20" fill="none" className="absolute top-[345px] left-[502px]">
        <path d="M1 1h2l1.500 1L6 1h2M4.500 2v16M1 19h2l1.500-1L6 19h2" stroke="#222" />
      </svg>
    </div>
  );
}

// ---------- sidebar ----------

function Section({ title }: { title: string }) {
  return (
    <div className="mr-[1px] flex h-[18px] items-center bg-[#ebebeb] pr-[3px] pl-[3px]">
      <ChevronDown size={11} strokeWidth={2} color="#555" />
      <h3 className="ml-[2px] flex-1 text-[14px] leading-[18px] font-bold text-[#3b3b3b]">{title}</h3>
      <svg width="12" height="12" viewBox="0 0 12 12" fill="none">
        <circle cx="6" cy="6" r="4.500" fill="#ccc" stroke="#777" />
        <circle cx="6" cy="6" r="5.500" stroke="#888" strokeDasharray="2 1.500" />
        <circle cx="6" cy="6" r="1.500" stroke="#777" />
      </svg>
    </div>
  );
}

function Tool({ name, pressed, dim }: { name: string; pressed?: boolean; dim?: boolean }) {
  return (
    <button
      type="button"
      aria-label={name}
      className={`flex h-[34px] w-9 items-center justify-center rounded-md border ${
        pressed ? "border-[#c4c4c4] bg-[#d6d6d6]" : "border-transparent"
      } ${dim ? "opacity-50" : ""}`}
    >
      <Icon name={name} />
    </button>
  );
}

function Chev() {
  return (
    <button type="button" aria-label="More" className="flex h-[34px] w-[17px] items-center justify-center">
      <ChevronDown size={14} strokeWidth={2} color="#555" />
    </button>
  );
}

function Combo({ label, value, className }: { label: string; value: string; className: string }) {
  return (
    <label className={`relative flex h-[34px] rounded-md border border-[#c4c4c4] bg-white ${className}`}>
      <select aria-label={label} defaultValue={value} className="w-full appearance-none rounded-md bg-transparent pl-2 text-[14px] text-[#1a1a1a]">
        <option>{value}</option>
      </select>
      <span className="pointer-events-none absolute inset-y-0 right-0 flex w-[35px] items-center justify-center border-l border-[#c4c4c4]">
        <ChevronDown size={14} strokeWidth={2} color="#555" />
      </span>
    </label>
  );
}

function Spin({ icon, label, value }: { icon: string; label: string; value: string }) {
  const atMin = value.startsWith("0.00");
  return (
    <div className="flex h-[42px] items-center gap-[5px]">
      <Icon name={icon} />
      <div className="flex h-[42px] w-[186px] rounded-md border border-[#c4c4c4] bg-white">
        <input aria-label={label} defaultValue={value} className="w-[114px] pl-2 text-[14px] text-[#1a1a1a]" />
        {["Decrease", "Increase"].map((step) => (
          <button
            key={step}
            type="button"
            aria-label={`${step} ${label}`}
            className="flex flex-1 items-center justify-center border-l border-[#e2e2e2]"
          >
            <svg width="11" height="11" viewBox="0 0 11 11" fill="none">
              <path
                d={step === "Increase" ? "M0 5.500h11M5.500 0v11" : "M0 5.500h11"}
                stroke={step === "Decrease" && atMin ? "#d5d5d5" : "#3b3b3b"}
              />
            </svg>
          </button>
        ))}
      </div>
    </div>
  );
}

function Sidebar() {
  const row = "flex gap-px px-[10px]";
  return (
    <aside className="flex w-[504px] shrink-0 pt-[2px]">
      <div className="flex-1 pl-[2px]">
        <div className="flex h-6 items-center pr-[7px]">
          <svg width="9" height="13" viewBox="0 0 9 13" fill="#888" className="ml-px">
            {[1.5, 6.5, 11.5].map((y) => (
              <g key={y}>
                <circle cx="2" cy={y} r="1.400" />
                <circle cx="7" cy={y} r="1.400" />
              </g>
            ))}
          </svg>
          <h2 className="ml-[6px] flex-1 text-[14px] font-bold text-[#3b3b3b]">Properties</h2>
          <button type="button" aria-label="Close sidebar">
            <Cross size={10} color="#3b3b3b" width={1.5} />
          </button>
        </div>

        <Section title="Character" />
        <div className="mt-[10px] flex gap-[14px] pl-[10px]">
          <Combo label="Font name" value="Arial" className="w-[317px]" />
          <Combo label="Font size" value="32 pt" className="w-[101px]" />
        </div>
        <div className={`${row} mt-[11px]`}>
          <Tool name="bold" />
          <Tool name="italic" pressed />
          <Tool name="underline" />
          <Chev />
          <Tool name="strike" />
          <Tool name="shadowA" />
          <span className="flex-1" />
          <Tool name="grow" />
          <Tool name="shrink" />
        </div>
        <div className={`${row} mt-[11px]`}>
          <Tool name="fontColor" />
          <Chev />
          <span className="w-3" />
          <Tool name="highlight" />
          <Chev />
          <span className="w-3" />
          <Tool name="clear" />
          <span className="flex-1" />
          <Tool name="sup" />
          <Tool name="sub" />
          <span className="w-3" />
          <Tool name="kern" />
          <Chev />
        </div>

        <div className="mt-[11px]">
          <Section title="Lists" />
        </div>
        <div className={`${row} mt-[10px]`}>
          <Tool name="bullets" />
          <Chev />
          <Tool name="numbers" />
          <Chev />
          <span className="flex-1" />
          <Tool name="indentMore" />
          <Tool name="indentLess" dim />
          <Tool name="demote" dim />
          <Tool name="promote" dim />
        </div>

        <div className="mt-[11px]">
          <Section title="Paragraph" />
        </div>
        <div className={`${row} mt-[10px]`}>
          <Tool name="alignL" pressed />
          <Tool name="alignC" />
          <Tool name="alignR" />
          <Tool name="alignJ" />
          <span className="flex-1" />
          <Tool name="vTop" pressed />
          <Tool name="vMid" />
          <Tool name="vBot" />
        </div>
        <hr className="mt-[10px] mr-[10px] ml-[9px] border-[#dedede]" />
        <div className="flex pl-[6px]">
          <div className="w-[223px]">
            <div className="mt-px h-6 text-[14px] leading-6 text-[#3b3b3b]">Spacing:</div>
            <div className="mt-[2px] flex gap-px pl-1">
              <Tool name="parMore" />
              <Tool name="parLess" />
            </div>
            <div className="mt-[7px] flex flex-col gap-[3px] pl-[2px]">
              <Spin icon="spaceAbove" label="Above paragraph spacing" value="0.50 cm" />
              <Spin icon="spaceBelow" label="Below paragraph spacing" value="0.00 cm" />
              <div className="mt-1 flex pl-[5px]">
                <Tool name="lineSpacing" />
                <Chev />
              </div>
            </div>
          </div>
          <div>
            <div className="mt-px h-6 text-[14px] leading-6 text-[#3b3b3b]">Indent:</div>
            <div className="mt-[2px] flex gap-px pl-1">
              <Tool name="indentMore" />
              <Tool name="indentLess" />
              <Tool name="hanging" />
            </div>
            <div className="mt-[7px] flex flex-col gap-[3px] pl-[2px]">
              <Spin icon="beforeText" label="Before text indent" value="0.00 cm" />
              <Spin icon="afterText" label="After text indent" value="0.00 cm" />
              <Spin icon="indentMore" label="First line indent" value="0.00 cm" />
            </div>
          </div>
        </div>
      </div>

      <div className="flex w-[49px] shrink-0 flex-col items-center gap-2 pr-[7px]">
        <button type="button" aria-label="Sidebar settings" className="mb-[2px] flex h-9 w-9 items-center justify-center">
          <svg width="10" height="10" viewBox="0 0 10 10">
            <path d="M0 .5h10M0 5h10M0 9.500h10" stroke="#3b3b3b" />
          </svg>
        </button>
        <Tool name="props" pressed />
        {["styles", "gallery", "navigator", "diamond", "transition", "animation", "master"].map((name) => (
          <Tool key={name} name={name} />
        ))}
      </div>
    </aside>
  );
}

// ---------- status bar ----------

function StatusBar() {
  const cell = "flex items-center border-[#dcdcdc] h-[14px]";
  return (
    <footer className="flex h-[21px] items-center border-t border-[#b9b9b9] pt-px text-[12px] whitespace-nowrap text-[#3b3b3b]">
      <span className={`${cell} w-[76px] border-r pl-[10px]`}>Slide 1 of 1</span>
      <span className={`${cell} w-[537px] border-r pl-2`}>TextEdit: Paragraph 1, Row 6, Column 33</span>
      <span className={`${cell} flex-1 border-r pl-2`}>Blank Slide</span>
      <span className={`${cell} w-[105px] gap-[5px] pl-[10px]`}>
        <svg width="15" height="13" viewBox="0 0 15 13" fill="none">
          <path d="M6 3.500h8.500v8h-11V6" stroke={K} />
          <path d="M0 3.500h6M3.500 1v5" stroke={O} />
        </svg>
        1.27 / 4.45
      </span>
      <span className={`${cell} w-[112px] gap-1 border-r pl-[11px]`}>
        <svg width="16" height="15" viewBox="0 0 16 15" fill="none">
          <rect x="3.500" y="6.500" width="11" height="7" rx="1" stroke={K} />
          <path d="M3.500 1v3M14.500 1v3M3.500 2.500h11M0 6.500h2.500M0 13.500h2.500M1.500 6.500v7" stroke={O} />
        </svg>
        22.86 x 12.57
      </span>
      <span className={`${cell} w-[23px] justify-center border-r`}>
        <svg width="10" height="12" viewBox="0 0 10 12" fill="none">
          <path d="M3.500 .5h3V5H9L5 9.500 1 5h2.500z" fill="#8fd03f" stroke="#55702c" />
          <path d="M1 11.500h8" stroke={K} />
        </svg>
      </span>
      <span className={`${cell} w-[29px] border-r`} />
      <span className={`${cell} w-[386px] justify-center border-r pl-[2px]`}>English (USA)</span>
      <span className={`${cell} w-[22px] justify-center border-r`}>
        <svg width="15" height="15" viewBox="0 0 15 15" fill="none">
          <path d="M7.500 1v13M1 7.500h13M5.500 3l2-2 2 2M5.500 12l2 2 2-2M3 5.500l-2 2 2 2M12 5.500l2 2-2 2" stroke={O} strokeWidth="1.500" />
        </svg>
      </span>
      <span className={`${cell} w-[143px] border-r pl-[11px]`}>
        <button type="button" aria-label="Zoom out" className="h-[2px] w-[7px] bg-[#555]" />
        <input
          type="range"
          aria-label="Zoom"
          className="mx-[6px] h-3 w-[97px] appearance-none bg-transparent [&::-webkit-slider-runnable-track]:h-[2px] [&::-webkit-slider-runnable-track]:bg-[#8e8e8e] [&::-webkit-slider-thumb]:-mt-[3px] [&::-webkit-slider-thumb]:size-2 [&::-webkit-slider-thumb]:appearance-none [&::-webkit-slider-thumb]:rounded-full [&::-webkit-slider-thumb]:border [&::-webkit-slider-thumb]:border-[#555] [&::-webkit-slider-thumb]:bg-white"
        />
        <button type="button" aria-label="Zoom in">
          <svg width="9" height="9" viewBox="0 0 9 9">
            <path d="M0 4.500h9M4.500 0v9" stroke="#555" strokeWidth="2" />
          </svg>
        </button>
      </span>
      <span className={`${cell} w-[49px] pl-2`}>107%</span>
    </footer>
  );
}

const menus = ["File", "Edit", "View", "Insert", "Format", "Slide", "Slide Show", "Tools", "Window", "Help"];

export default function App() {
  return (
    <div className="flex h-screen flex-col overflow-hidden bg-[#fafafa] font-['Open_Sans','Noto_Sans',sans-serif]">
      <header className="grid h-[27px] shrink-0 grid-cols-[1fr_auto_1fr] items-center bg-[#141414] text-[14px] text-[#e6e6e6]">
        <div className="flex items-center pl-5">
          <button type="button">Activities</button>
          <button type="button" className="ml-10 flex items-center gap-2">
            <svg width="12" height="15" viewBox="0 0 12 15" fill="none">
              <path d="M1 0h8l3 3v11q0 1-1 1H1q-1 0-1-1V1q0-1 1-1z" fill="#eee" />
              <path d="M2 5.500h8v6H2zM3.500 7.500h1M5.500 7.500h3M3.500 9.500h1M5.500 9.500h3" stroke="#222" />
            </svg>
            LibreOffice Impress
          </button>
        </div>
        <div className="flex items-center gap-[18px] pl-[102px]">
          <span className="whitespace-pre">Apr 21  23:41</span>
          <Bell size={14} />
        </div>
        <div className="flex items-center justify-end gap-3 pr-[18px]">
          <Volume2 size={16} />
          <Power size={14} />
        </div>
      </header>

      <div className="flex min-h-0 flex-1">
        <Dock />
        <div className="flex min-w-0 flex-1 flex-col">
          <div className="grid h-[37px] grid-cols-[1fr_auto_1fr] items-center border-b border-[#bcbcbc] bg-[#ebebeb] text-[#333]">
            <span />
            <h1 className="text-[14px] font-bold">69_4.pptx - LibreOffice Impress</h1>
            <div className="flex justify-end gap-[13px] pr-2">
              <button type="button" aria-label="Minimize" className="flex size-[21px] items-center justify-center rounded-full bg-[#dcdcdc]">
                <span className="mt-[6px] h-px w-2 bg-[#333]" />
              </button>
              <button type="button" aria-label="Restore" className="flex size-[21px] items-center justify-center rounded-full bg-[#dcdcdc]">
                <svg width="9" height="9" viewBox="0 0 9 9" fill="none">
                  <path d="M.5 2.500h6v6h-6zM2.500 2.500V.5h6v6h-2" stroke="#333" />
                </svg>
              </button>
              <button type="button" aria-label="Close" className="flex size-[21px] items-center justify-center rounded-full bg-[#dcdcdc]">
                <Cross size={9} color="#333" />
              </button>
            </div>
          </div>

          <div role="menubar" className="flex h-[25px] items-center gap-[18px] border-b border-[#dedede] pr-3 pl-2 text-[14px] text-[#3b3b3b]">
            {menus.map((menu) => (
              <button key={menu} type="button" role="menuitem">
                {menu}
              </button>
            ))}
            <button type="button" aria-label="Close document" className="ml-auto">
              <Cross size={9} color="#333" width={1.5} />
            </button>
          </div>

          <Toolbar label="Standard" items={standardBar} className="h-[38px] pl-[2px]" />
          <Toolbar label="Drawing" items={drawingBar} className="h-[39px] pl-1" />

          <div className="flex min-h-0 flex-1">
            <SlidesPanel />
            <div className="flex w-[9px] items-center border-l border-[#b3b3b3]">
              <Splitter />
            </div>
            <main className="flex min-w-0 flex-1 flex-col">
              <InfoBar text="Help us make LibreOffice even better!" action="Get involved" />
              <InfoBar text="Your donations support our worldwide community." action="Donate" />
              <div className="flex min-h-0 flex-1">
                <div className="flex flex-1 flex-col">
                  <Slide />
                  <span className="mt-auto mb-[3px] ml-[362px] h-[6px] w-[403px] rounded-sm bg-[#8a8a8a]" />
                </div>
                <span className="mt-[198px] mr-[3px] h-[408px] w-[6px] rounded-sm bg-[#8a8a8a]" />
              </div>
            </main>
            <div className="flex w-[7px] items-center border-l border-[#b3b3b3]">
              <Splitter flip />
            </div>
            <Sidebar />
          </div>

          <StatusBar />
        </div>
      </div>
    </div>
  );
}
